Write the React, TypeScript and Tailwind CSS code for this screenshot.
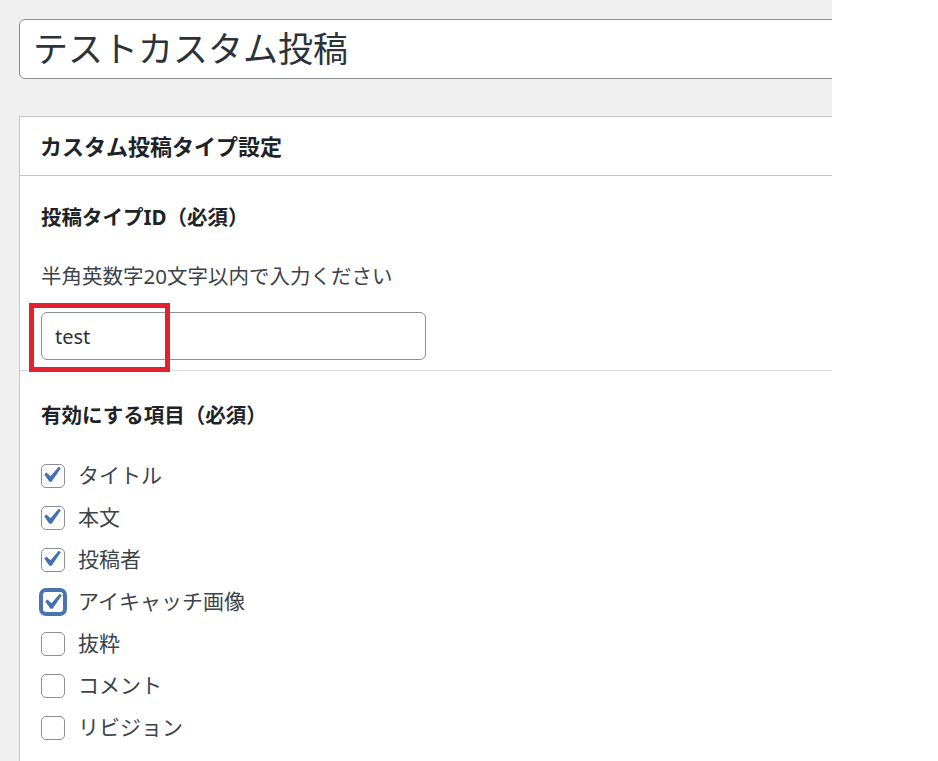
import { useState } from "react"

const items = [
  { label: "タイトル", checked: true },
  { label: "本文", checked: true },
  { label: "投稿者", checked: true },
  { label: "アイキャッチ画像", checked: true, focused: true },
  { label: "抜粋", checked: false },
  { label: "コメント", checked: false },
  { label: "リビジョン", checked: false },
]

function CheckIcon() {
  return (
    <svg viewBox="0 0 20 20" className="absolute left-[-7px] top-[-6px] h-[32px] w-[32px]">
      <path d="M14.83 4.89l1.34.94-5.81 8.38H9.02L5.78 9.67l1.34-1.25 2.57 2.4z" fill="#4272b4" />
    </svg>
  )
}

export default function App() {
  const [checks, setChecks] = useState(items.map((i) => i.checked))
  const [postType, setPostType] = useState("test")

  return (
    <div className="min-h-screen bg-white font-['Noto_Sans','Noto_Sans_CJK_JP',sans-serif] text-[#3c434a]">
      <div className="w-[832px] h-[761px] overflow-hidden bg-[#f0f0f1] pl-[19px] pt-[19px]">
        {/* title */}
        <div className="flex h-[60px] w-[900px] items-center rounded-l-[6px] border border-[#8c8f94] bg-white pl-[13px] text-[35px] text-[#2c3338]">
          テストカスタム投稿
        </div>

        {/* settings box */}
        <div className="mt-[37px] w-[900px] border border-[#c3c4c7] bg-white pb-[60px]">
          <div className="flex h-[59px] items-center border-b border-[#c3c4c7] px-[20px] text-[22px] font-bold text-[#1d2327]">
            カスタム投稿タイプ設定
          </div>

          <div className="border-b border-[#dcdcde] pl-[21px] pt-[26px] pb-[10px]">
            <div className="text-[20.5px] leading-[30px] font-bold text-[#1d2327]">投稿タイプID（必須）</div>
            <div className="mt-[29px] text-[20.5px] leading-[30px]">半角英数字20文字以内で入力ください</div>
            <div className="relative mt-[21px] w-[385px]">
              <input
                value={postType}
                onChange={(e) => setPostType(e.target.value)}
                className="h-[48px] w-full rounded-[6px] border border-[#8c8f94] bg-white px-[13px] text-[20px] text-[#2c3338] outline-none"
              />
              <div className="pointer-events-none absolute left-[-12px] top-[-9px] h-[69px] w-[141px] border-[5px] border-[#e5202e]" />
            </div>
          </div>

          <div className="pl-[21px] pt-[29px]">
            <div className="text-[20.5px] leading-[30px] font-bold text-[#1d2327]">有効にする項目（必須）</div>
            <div className="mt-[25px] flex flex-col">
              {items.map((item, i) => (
                <label key={item.label} className="flex h-[42px] cursor-pointer items-center gap-[13px] text-[21px]">
                  <span
                    onClick={() => setChecks(checks.map((c, j) => (j === i ? !c : c)))}
                    className={
                      item.focused
                        ? "relative h-[24px] w-[24px] rounded-[5px] border-2 border-[#4a74b0] bg-white shadow-[0_0_0_2px_#4a74b0]"
                        : "relative h-[24px] w-[24px] rounded-[5px] border border-[#8c8f94] bg-white"
                    }
                  >
                    {checks[i] && <CheckIcon />}
                  </span>
                  <span>{item.label}</span>
                </label>
              ))}
            </div>
          </div>
        </div>
      </div>
    </div>
  )
}
